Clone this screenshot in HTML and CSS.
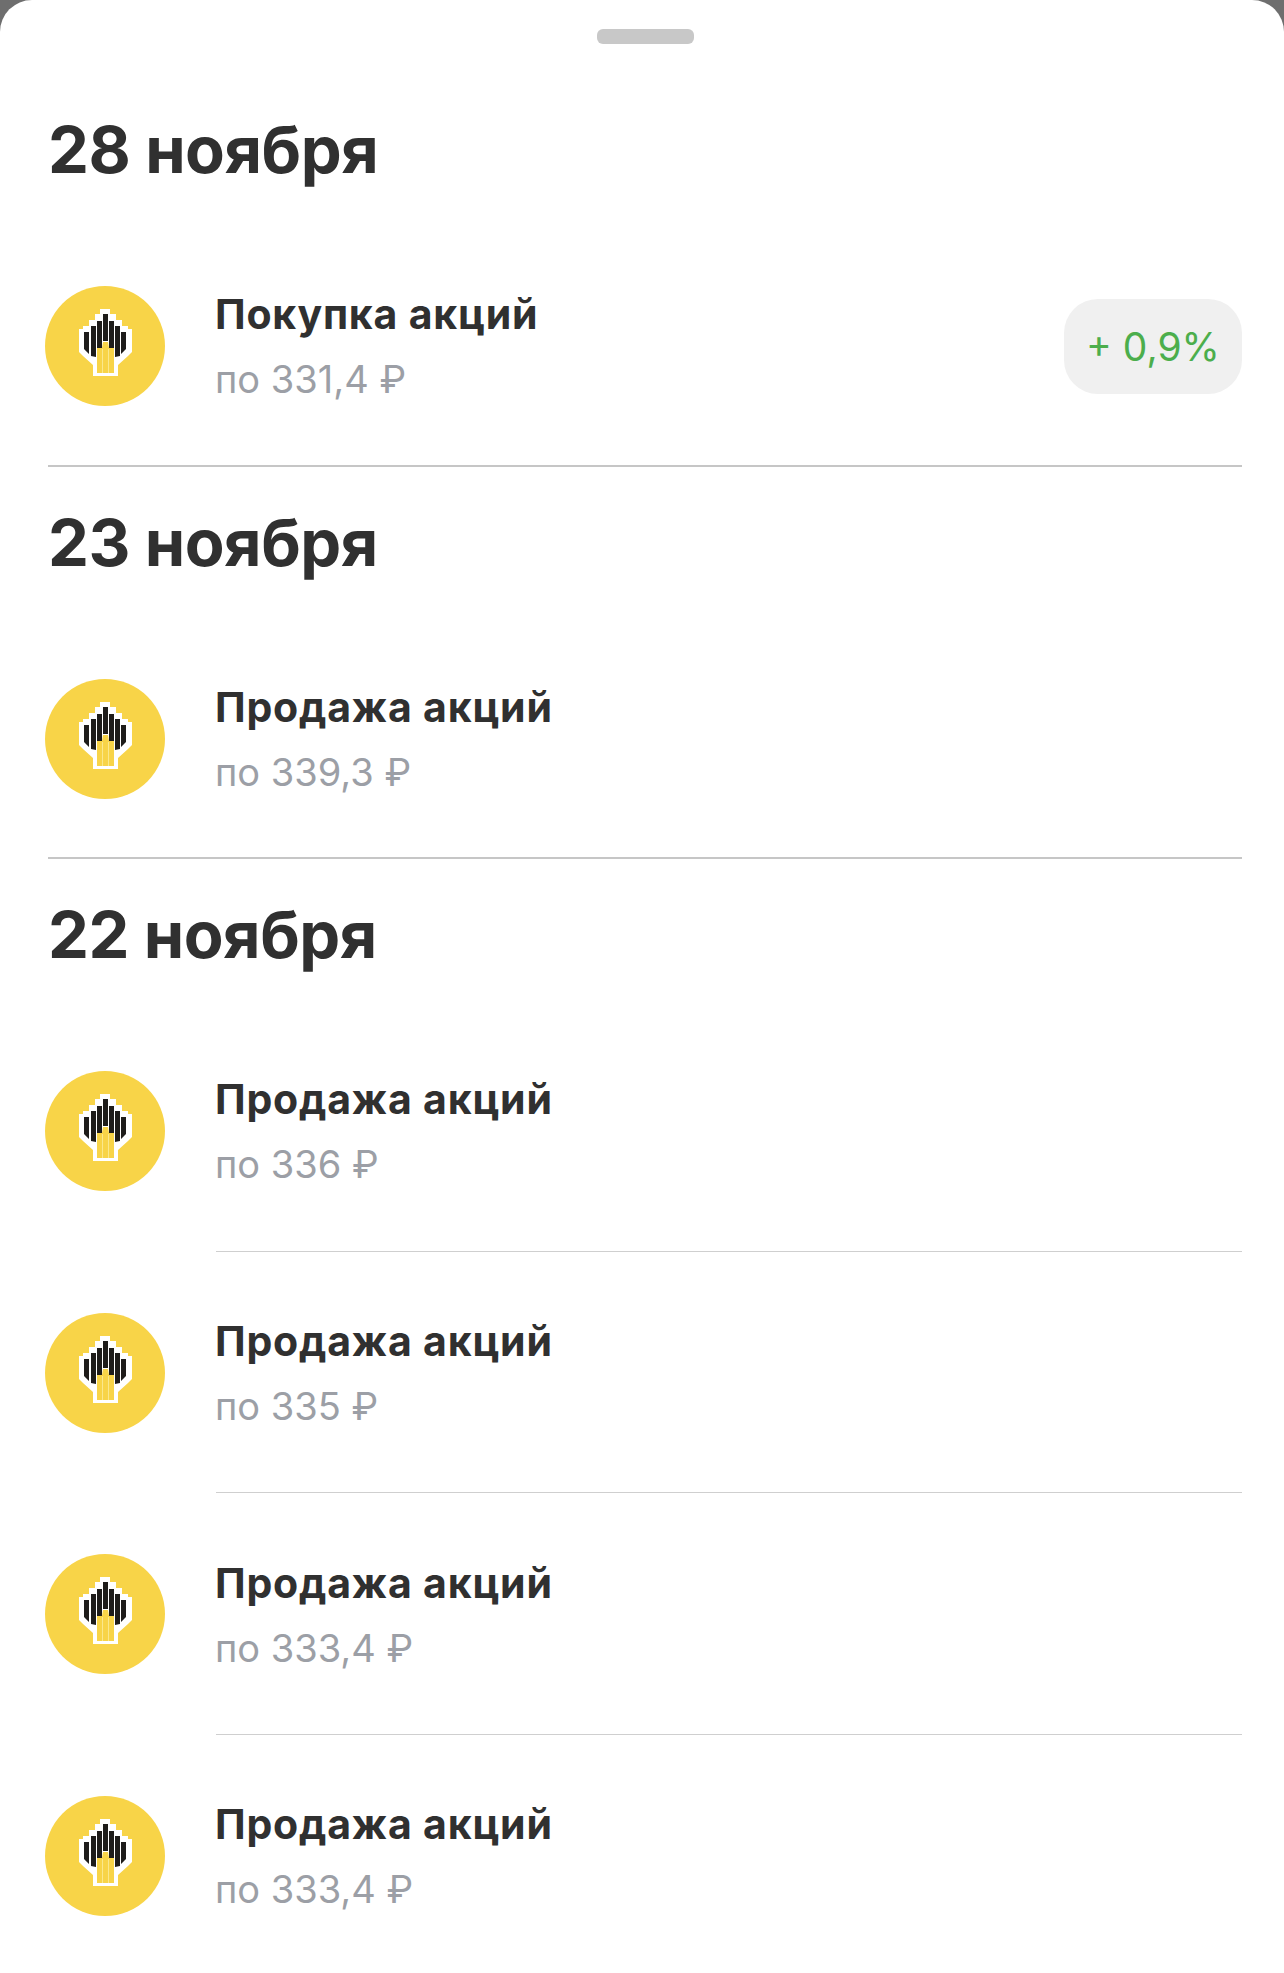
FILE: index.html
```html
<!DOCTYPE html>
<html lang="ru">

<head>
    <meta charset="UTF-8">
    <meta name="viewport" content="width=device-width, initial-scale=1.0">
    <title>Операции</title>
    <link rel="stylesheet" href="styles.css">
</head>

<body>
    <svg class="defs">
        <symbol id="logo" viewBox="0 0 60 80">
            <path fill="#fff" d="M25 4h10v5h6v6h6v6h6v3h4v23l-4 4-10 9v11H18V60L8 51l-4-4V24h4v-3h6v-6h6V9h5z"/>
            <path fill="#1e1c1a" d="M9 27h5v22l-5-5zM16 21h5v31l-5-1zM22 16h5v27h-5zM28 9h5v27h-5zM34 16h5v27h-5zM40 21h5v30l-5 1zM46 27h5v17l-5 5z"/>
            <path fill="#f8d448" d="M22 43h5l1-6h5l1 6h5v25H22z"/>
            <path stroke="#fbe88c" stroke-width="1" d="M27.500 44v24M33.500 44v24"/>
        </symbol>
    </svg>

    <div class="sheet">
        <div class="handle"></div>

        <section class="day day-first">
            <h2>28 ноября</h2>
            <div class="row">
                <svg class="icon"><use href="#logo" x="30" y="19" width="60" height="80"/></svg>
                <div class="info">
                    <div class="title">Покупка акций</div>
                    <div class="price">по 331,4 ₽</div>
                </div>
                <div class="badge">+ 0,9%</div>
            </div>
        </section>

        <section class="day">
            <h2>23 ноября</h2>
            <div class="row">
                <svg class="icon"><use href="#logo" x="30" y="19" width="60" height="80"/></svg>
                <div class="info">
                    <div class="title">Продажа акций</div>
                    <div class="price">по 339,3 ₽</div>
                </div>
            </div>
        </section>

        <section class="day day-last">
            <h2>22 ноября</h2>
            <div class="row row-line">
                <svg class="icon"><use href="#logo" x="30" y="19" width="60" height="80"/></svg>
                <div class="info">
                    <div class="title">Продажа акций</div>
                    <div class="price">по 336 ₽</div>
                </div>
            </div>
            <div class="row row-line">
                <svg class="icon"><use href="#logo" x="30" y="19" width="60" height="80"/></svg>
                <div class="info">
                    <div class="title">Продажа акций</div>
                    <div class="price">по 335 ₽</div>
                </div>
            </div>
            <div class="row row-line">
                <svg class="icon"><use href="#logo" x="30" y="19" width="60" height="80"/></svg>
                <div class="info">
                    <div class="title">Продажа акций</div>
                    <div class="price">по 333,4 ₽</div>
                </div>
            </div>
            <div class="row">
                <svg class="icon"><use href="#logo" x="30" y="19" width="60" height="80"/></svg>
                <div class="info">
                    <div class="title">Продажа акций</div>
                    <div class="price">по 333,4 ₽</div>
                </div>
            </div>
        </section>
    </div>
</body>

</html>
```

FILE: styles.css
```css
html, body {
    margin: 0;
    height: 100%;
    overflow: hidden;
    background-color: #6e6e6e;
}

.defs {
    display: none;
}

.sheet {
    height: 1973px;
    box-sizing: border-box;
    padding-top: 29px;
    background-color: #fff;
    border-radius: 32px 32px 0 0;
    font-family: Inter, "Noto Sans", sans-serif;
    color: #303030;
}

.handle {
    width: 97px;
    height: 15px;
    margin: 0 auto;
    background-color: #c8c8c8;
    border-radius: 6px;
    transform: translateX(3px);
}

.day {
    margin: 0 42px 0 48px;
    height: 392px;
    box-sizing: border-box;
    border-bottom: 2px solid #c6c6c6;
}

.day-first {
    height: 423px;
    padding-top: 66px;
}

.day-last {
    border-bottom: none;
    height: auto;
}

.day h2 {
    margin: 0 0 35px;
    height: 80px;
    padding-top: 36px;
    font-size: 65px;
    line-height: 80px;
    font-weight: 700;
    letter-spacing: -0.5px;
}

.day-first h2 {
    padding-top: 0;
}

.row {
    display: flex;
    align-items: center;
    height: 241.7px;
    box-sizing: border-box;
    position: relative;
    margin-left: -3px;
}

.row-line::after {
    content: "";
    position: absolute;
    left: 171px;
    right: 0;
    bottom: 0;
    height: 1px;
    background-color: #cfcfcf;
}

.icon {
    flex: none;
    width: 120px;
    height: 120px;
    margin-right: 50px;
    background-color: #f8d448;
    border-radius: 50%;
}

.info {
    flex: 1;
    padding-top: 2px;
}

.title {
    font-size: 41px;
    line-height: 50px;
    font-weight: 700;
    letter-spacing: 0.8px;
}

.price {
    margin-top: 15px;
    font-size: 38px;
    line-height: 50px;
    color: #9c9fa6;
}

.badge {
    flex: none;
    width: 178px;
    height: 95px;
    margin-top: 2px;
    line-height: 95px;
    text-align: center;
    font-size: 39px;
    color: #4cae4c;
    background-color: #f0f0f0;
    border-radius: 34px;
}
```
